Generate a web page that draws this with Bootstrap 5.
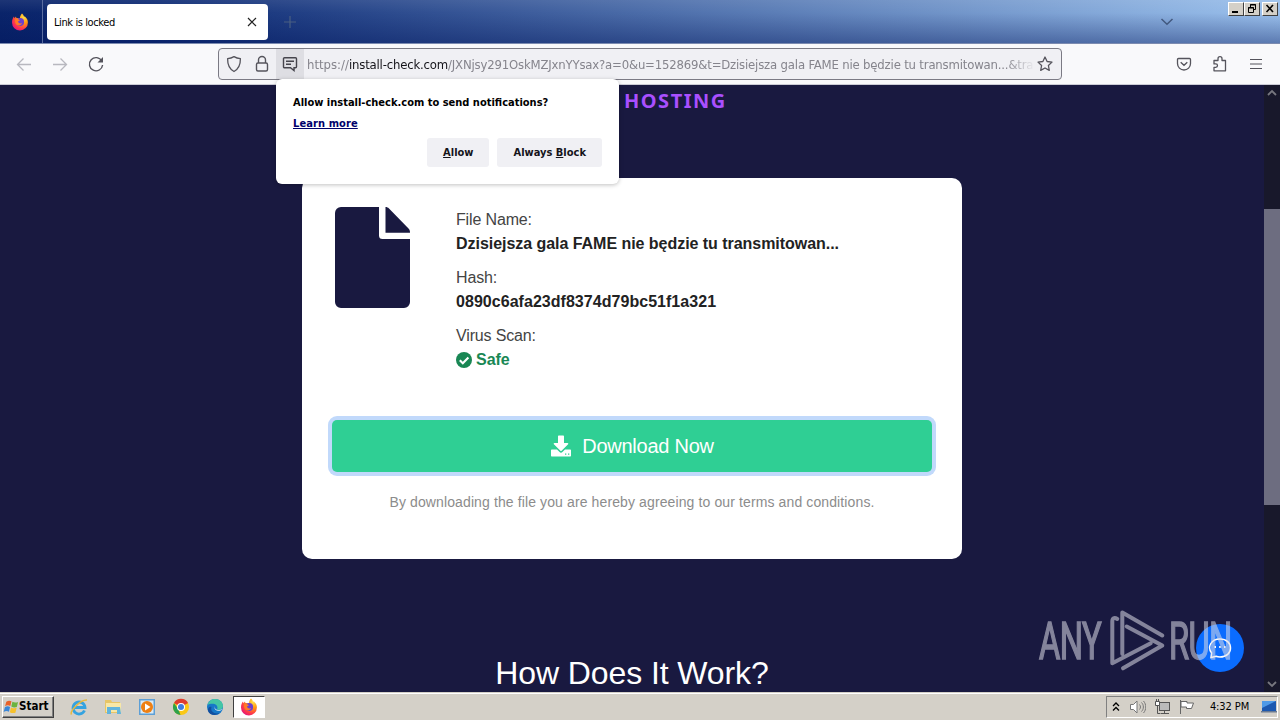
<!DOCTYPE html>
<html lang="en">
<head>
    <meta charset="UTF-8">
    <meta name="viewport" content="width=device-width, initial-scale=1.0">
    <title>Link is locked</title>
    <link href="https://cdn.jsdelivr.net/npm/bootstrap@5.3.0/dist/css/bootstrap.min.css" rel="stylesheet">
    <script src="https://cdn.jsdelivr.net/npm/bootstrap@5.3.0/dist/js/bootstrap.bundle.min.js"></script>
    <style>
        body {
            height: 720px;
            font-family: "Liberation Sans", Arial, sans-serif;
            background: #191940;
        }
        svg {
            display: block;
            flex-shrink: 0;
        }
        .ui-font {
            font-family: "DejaVu Sans Condensed", "DejaVu Sans", sans-serif;
            font-stretch: condensed;
            font-size: 11px;
        }

        /* Tab strip */
        .tab-strip {
            height: 44px;
            background: linear-gradient(to bottom, rgba(255, 255, 255, .08), rgba(0, 20, 90, 0) 30%, rgba(0, 20, 90, .4)),
                        linear-gradient(to right, #0a246a, #0f2c75 12%, #9ac0ec);
            border-bottom: 1px solid #7c8bb0;
        }
        .pinned {
            width: 43px;
            height: 43px;
            border-right: 1px solid #5a6da0;
            padding-left: 11px;
        }
        .open-tab {
            width: 221px;
            height: 36px;
            margin: 1px 15px 0 4px;
            padding: 0 10px 0 7px;
            border-radius: 4px;
            color: #000;
        }
        .open-tab span {
            padding-top: 2px;
            letter-spacing: -.4px;
        }
        .win-btn {
            width: 16px;
            height: 14px;
            background: #d4d0c8;
            border: 1px solid;
            border-color: #fff #404040 #404040 #fff;
        }
        .win-btns {
            margin: 2px 2px 0 54px;
        }
        .win-close {
            margin-left: 2px;
        }

        /* Toolbar */
        .toolbar {
            height: 41px;
            padding-left: 15px;
            background: #f9f9fb;
            border-bottom: 1px solid #ccccd6;
        }
        .nav-icons {
            width: 203px;
            gap: 18px;
        }
        .url-bar {
            width: 844px;
            height: 32px;
            padding-left: 7px;
            background: #f0f0f4;
            border: 1px solid #7b7a84;
            border-radius: 4px;
        }
        .lock-icon {
            margin: 0 6px 0 12px;
        }
        .perm-icon {
            width: 28px;
            height: 30px;
            background: #dedee3;
        }
        .url-text {
            margin-left: 3px;
            padding-top: 1px;
            font-family: "DejaVu Sans Condensed", "DejaVu Sans", sans-serif;
            font-stretch: condensed;
            font-size: 13px;
            letter-spacing: -.18px;
            color: #85848c;
            -webkit-mask-image: linear-gradient(to right, #000 698px, transparent 728px);
            mask-image: linear-gradient(to right, #000 698px, transparent 728px);
        }
        .url-text b {
            font-weight: 400;
            color: #15141a;
        }
        .url-text i {
            font-style: normal;
            letter-spacing: 0;
        }

        /* Page */
        .page-area {
            height: 607px;
            background: #191940;
        }
        .page-body {
            width: 1264px;
        }
        .brand-line {
            height: 93px;
            padding: 2px 0 0 624px;
            font-family: "Noto Sans", sans-serif;
            font-weight: 700;
            font-size: 20px;
            line-height: 28px;
            letter-spacing: 1.5px;
            color: #a94fff;
        }
        .file-card {
            width: 660px;
            height: 381px;
            padding: 29px 30px 0;
            border-radius: 10px;
            color: #222;
        }
        .file-icon {
            width: 124px;
            padding-left: 3px;
        }
        .file-info {
            padding-top: 1px;
        }
        .file-info dt {
            font-weight: 400;
            letter-spacing: -.15px;
            color: #444;
        }
        .file-info dd {
            margin-bottom: 10px;
            font-weight: 700;
            letter-spacing: -.04px;
        }
        .file-info dd.hash {
            letter-spacing: .04px;
        }
        .file-info dd.safe {
            color: #198754;
        }
        .btn-download {
            height: 52px;
            margin-top: 38px;
            background: #2fcf94;
            border-radius: 5px;
            box-shadow: 0 0 0 4px #c1d9fb;
            font-size: 20px;
            letter-spacing: -.25px;
            color: #fff;
            gap: 10px;
        }
        .terms {
            margin-top: 20px;
            font-size: 14px;
            letter-spacing: .115px;
            color: #8c8c8c;
        }
        .how-title {
            margin-top: 94px;
            font-size: 32px;
            line-height: 40px;
            letter-spacing: -.1px;
            color: #fff;
        }
        .scroll-col {
            width: 16px;
            background: #18182b;
        }
        .scroll-thumb {
            height: 296px;
            margin-top: 112px;
            background: #6d6d80;
        }

        /* Overlays */
        .perm-popup {
            left: 276px;
            top: 79px;
            width: 343px;
            height: 105px;
            padding: 16px 17px 0 16px;
            border-radius: 6px;
            box-shadow: 0 1px 4px rgba(0, 0, 0, .25);
            font-weight: 700;
            color: #000;
        }
        .perm-question,
        .perm-more {
            padding-left: 1px;
        }
        .perm-more {
            letter-spacing: .1px;
        }
        .perm-popup a {
            color: #00006b;
        }
        .popup-btns {
            margin-top: 6px;
        }
        .popup-btn {
            height: 29px;
            padding-top: 1px;
            background: #f0f0f4;
            border-radius: 3px;
            color: #15141a;
        }
        .chat-bubble {
            left: 1196px;
            top: 624px;
            width: 48px;
            height: 48px;
            background: #0a6cff;
        }
        .brandmark {
            left: 1036px;
            top: 606px;
        }

        /* Taskbar */
        .win-bar {
            height: 28px;
            background: #d4d0c8;
            border-top: 1px solid #d4d0c8;
            box-shadow: inset 0 1px #fff;
            padding: 3px 2px 0;
            color: #000;
        }
        .start-btn {
            width: 52px;
            height: 22px;
            border: 1px solid;
            border-color: #fff #404040 #404040 #fff;
            box-shadow: inset -1px -1px #808080;
            font-size: 11.5px;
            font-weight: 700;
        }
        .quick-launch {
            margin-left: 15px;
            gap: 14px;
        }
        .running-app {
            width: 32px;
            height: 22px;
            background: #fff;
            border: 1px solid;
            border-color: #404040 #fff #fff #404040;
            margin-left: -6px;
        }
        .tray {
            width: 172px;
            height: 22px;
            border: 1px solid;
            border-color: #808080 #fff #fff #808080;
        }
        .tray-time {
            padding-left: 3px;
            letter-spacing: -.1px;
        }
    </style>
</head>
<body class="overflow-hidden position-relative">
    <!-- Shared app icon -->
    <svg width="0" height="0" class="position-absolute">
        <defs>
            <radialGradient id="foxGrad" cx=".75" cy=".2" r=".9">
                <stop offset="0" stop-color="#ffe14a"/>
                <stop offset=".4" stop-color="#ff980e"/>
                <stop offset=".75" stop-color="#ff3b47"/>
                <stop offset="1" stop-color="#e3167a"/>
            </radialGradient>
            <symbol id="firefox" viewBox="0 0 18 18">
                <path fill="url(#foxGrad)" d="M11 .5c1.200 1 1.700 2 1.900 3.100 1-.1 1.600.400 2.100 1.200 1 .8 1.800 2.500 1.900 4.600A8 8 0 0 1 9 17.500 8 8 0 0 1 1 9.500c0-2.600.9-4.700 2-5.900l.4 1.600L5 3.600l.4 1.500c1.200-.3 2.400 0 3.400.5C9 3.500 9.700 1.600 11 .5z"/>
                <circle cx="9.200" cy="9" r="3.900" fill="#6b3fd0"/>
                <path fill="#ff7a26" d="M4.300 6.200c1.600-.5 3.400 0 4.700 1.100l-2 1.300c.2 1.600 2.100 2.400 4 1.500-.6 2.300-3.800 3.200-5.700 1.300C4 10.100 3.700 8 4.300 6.200z"/>
            </symbol>
        </defs>
    </svg>

    <!-- Tab strip -->
    <div class="tab-strip d-flex align-items-center ui-font">
        <div class="pinned d-flex align-items-center">
            <svg width="18" height="18"><use href="#firefox"/></svg>
        </div>
        <div class="open-tab bg-white d-flex align-items-center justify-content-between">
            <span>Link is locked</span>
            <svg width="12" height="12" viewBox="0 0 12 12" fill="none" stroke="#222" stroke-width="1.200"><path d="M2 2l8 8M10 2l-8 8"/></svg>
        </div>
        <svg width="14" height="14" viewBox="0 0 14 14" fill="none" stroke="#4a5f82" stroke-width="1.200"><path d="M7 1v12M1 7h12"/></svg>
        <svg class="ms-auto" width="14" height="10" viewBox="0 0 14 10" fill="none" stroke="#43597f" stroke-width="1.500"><path d="M1.500 2L7 7.300 12.500 2"/></svg>
        <div class="win-btns d-flex align-self-start">
            <div class="win-btn"><svg width="14" height="12" viewBox="0 0 14 12"><path d="M3 8h6v2H3z"/></svg></div>
            <div class="win-btn"><svg width="14" height="12" viewBox="0 0 14 12" fill="none" stroke="#000"><path d="M5.500 4V1.500h5v5H9M5 2h6M3.500 4.500h5v5h-5zM3 5h6"/></svg></div>
            <div class="win-btn win-close"><svg width="14" height="12" viewBox="0 0 14 12" fill="none" stroke="#000" stroke-width="1.600"><path d="M3.500 2l6.500 7M10 2L3.500 9"/></svg></div>
        </div>
    </div>

    <!-- Toolbar -->
    <div class="toolbar d-flex align-items-center">
        <div class="nav-icons d-flex align-items-center">
            <svg width="18" height="18" viewBox="0 0 18 18" fill="none" stroke="#b8b8bf" stroke-width="1.300"><path d="M16 9.500H2.500M8.500 3.500l-6 6 6 6"/></svg>
            <svg width="18" height="18" viewBox="0 0 18 18" fill="none" stroke="#b8b8bf" stroke-width="1.300"><path d="M2 9.500h13.500M9.500 3.500l6 6-6 6"/></svg>
            <svg width="18" height="18" viewBox="0 0 18 18" fill="none" stroke="#55545c" stroke-width="1.400"><path d="M14.800 6A6.600 6.600 0 1 0 15.600 10"/><path d="M16 2v5.500h-5.500z" fill="#55545c" stroke="none"/></svg>
        </div>
        <div class="url-bar d-flex align-items-center">
            <svg width="16" height="18" viewBox="0 0 16 18" fill="none" stroke="#55545c" stroke-width="1.300"><path d="M8 1.600c2 1.200 4 1.800 6.400 2C14.500 9.500 12 14.500 8 16.500 4 14.500 1.500 9.500 1.600 3.600 4 3.400 6 2.800 8 1.600z" stroke-linejoin="round"/></svg>
            <svg class="lock-icon" width="16" height="18" viewBox="0 0 16 18" fill="none" stroke="#55545c" stroke-width="1.400"><rect x="2.500" y="8" width="11" height="8" rx="1.500"/><path d="M4.500 8V5a3.500 3.500 0 0 1 7 0v3"/></svg>
            <div class="perm-icon d-flex align-items-center justify-content-center">
                <svg width="16" height="16" viewBox="0 0 16 16" fill="none" stroke="#45444c" stroke-width="1.400"><path d="M2.500 1.700h11a1 1 0 0 1 1 1v8a1 1 0 0 1-1 1H12v2.800l-3.500-2.800h-6a1 1 0 0 1-1-1v-8a1 1 0 0 1 1-1zM4 5.200h8M4 8.200h5"/></svg>
            </div>
            <div class="url-text text-nowrap"><i>https://</i><b>install-check.com</b>/JXNjsy291OskMZJxnYYsax?a=0&amp;u=152869&amp;t=Dzisiejsza gala FAME nie będzie tu transmitowan...&amp;tra</div>
            <svg class="ms-auto me-2" width="16" height="16" viewBox="0 0 16 16" fill="none" stroke="#55545c" stroke-width="1.300" stroke-linejoin="round"><path d="M8 1l2.100 4.500 4.900.6-3.600 3.400.9 4.900L8 12l-4.300 2.400.9-4.900L1 6.100l4.900-.6z"/></svg>
        </div>
        <div class="d-flex align-items-center ms-auto me-3 gap-3">
            <svg class="me-1" width="16" height="16" viewBox="0 0 16 16" fill="none" stroke="#55545c" stroke-width="1.300"><path d="M2.500 2.500h11a1 1 0 0 1 1 1V7.500a6.500 6.500 0 0 1-13 0V3.500a1 1 0 0 1 1-1zM4.700 6.200L8 9.300l3.300-3.100"/></svg>
            <svg class="me-1" width="16" height="18" viewBox="0 0 16 18" fill="none" stroke="#55545c" stroke-width="1.300" stroke-linejoin="round"><path d="M2 5.500h4V3.700a2 2 0 0 1 4 0v1.800h3.500v10.300H2v-3.500h1.800a1.700 1.700 0 0 0 0-3.400H2z"/></svg>
            <svg width="16" height="16" viewBox="0 0 16 16" stroke="#55545c" stroke-width="1.200"><path d="M2 3.500h12M2 8h12M2 12.500h12"/></svg>
        </div>
    </div>

    <!-- Page -->
    <div class="page-area d-flex overflow-hidden">
        <div class="page-body">
            <div class="brand-line">HOSTING</div>
            <div class="file-card bg-white mx-auto">
                <div class="d-flex">
                    <div class="file-icon">
                        <svg width="75" height="101" viewBox="0 0 75 101" fill="#191940"><path d="M6 0h38v28.500a3.500 3.500 0 0 0 3.500 3.500H75V95a6 6 0 0 1-6 6H6a6 6 0 0 1-6-6V6a6 6 0 0 1 6-6z"/><path d="M50.500 0c1.500 0 2.500.500 3.500 1.500L73.500 21.500c1 1 1.500 2 1.500 4.300H50.500z"/></svg>
                    </div>
                    <dl class="file-info mb-0">
                        <dt>File Name:</dt>
                        <dd>Dzisiejsza gala FAME nie będzie tu transmitowan...</dd>
                        <dt>Hash:</dt>
                        <dd class="hash">0890c6afa23df8374d79bc51f1a321</dd>
                        <dt>Virus Scan:</dt>
                        <dd class="safe d-flex align-items-center gap-1">
                            <svg width="16" height="16" viewBox="0 0 16 16"><circle cx="8" cy="8" r="8" fill="#198754"/><path d="M3.800 8.300l3 3 5.600-5.800" fill="none" stroke="#fff" stroke-width="2.100"/></svg>
                            Safe
                        </dd>
                    </dl>
                </div>
                <div class="btn-download d-flex align-items-center justify-content-center" role="button">
                    <svg width="22" height="22" viewBox="0 0 22 22"><path fill="#fff" d="M8 1.500c0-.6.400-1 1-1h4c.6 0 1 .4 1 1V8h3.500c.8 0 1.100.8.600 1.300l-6.500 6.400a.9.900 0 0 1-1.200 0L3.900 9.300C3.400 8.800 3.700 8 4.500 8H8zM2 14.500h5l2.300 2.300a2.400 2.400 0 0 0 3.400 0l2.300-2.300h5c.6 0 1 .4 1 1v5c0 .6-.4 1-1 1H2c-.6 0-1-.4-1-1v-5c0-.6.400-1 1-1z"/><path fill="#2fcf94" d="M15 18.500h1.300v1.300H15zM18 18.500h1.300v1.300H18z"/></svg>
                    Download Now
                </div>
                <div class="terms text-center">By downloading the file you are hereby agreeing to our terms and conditions.</div>
            </div>
            <div class="how-title text-center">How Does It Work?</div>
        </div>
        <div class="scroll-col d-flex flex-column align-items-stretch pt-1">
            <svg class="align-self-center" width="10" height="8" viewBox="0 0 10 8" fill="none" stroke="#77777f" stroke-width="1.800"><path d="M1 6l4-4 4 4"/></svg>
            <div class="scroll-thumb"></div>
            <svg class="align-self-center mt-auto mb-1" width="10" height="8" viewBox="0 0 10 8" fill="none" stroke="#77777f" stroke-width="1.800"><path d="M1 2l4 4 4-4"/></svg>
        </div>
    </div>

    <!-- Taskbar -->
    <div class="win-bar d-flex align-items-start ui-font">
        <div class="start-btn d-flex align-items-center">
            <svg width="16" height="16" viewBox="0 0 17 16"><path fill="#e8622a" d="M3.500 2.500C5.500 1 7.500 1.200 9 2L7.800 7C6 6 4 6 2.200 7.200z"/><path fill="#6cb33f" d="M10 2.500c2 1 4 1 6 .2L14.700 8c-2 .8-4 .6-5.900-.5z"/><path fill="#3a87d8" d="M2 8.200c2-1.200 3.800-1.100 5.500-.2L6.300 13c-1.700-1-3.700-1-5.600.2z"/><path fill="#f6c12c" d="M8.500 8.500c2 1 4 1.200 6 .4L13.200 14c-2 .8-4 .6-5.900-.5z"/></svg>
            <span>Start</span>
        </div>
        <div class="quick-launch d-flex align-items-center">
            <svg width="20" height="20" viewBox="0 0 20 20" fill="none"><path d="M15.500 13.500A6 6 0 1 1 16 10.500H5" stroke="#35a3e0" stroke-width="2.800"/><path d="M2.500 17.500c-2-3 8.500-15 15.500-14.500" stroke="#e9b93c" stroke-width="1.500"/></svg>
            <svg width="20" height="20" viewBox="0 0 20 20"><path fill="#e7c566" d="M2 3h6l1 2h8v11H2z"/><path fill="#f8e7a6" d="M3 6h15v9H3z"/><path fill="#62b4dc" d="M4 10h13l1 7h-4v-4H8v4H4z"/></svg>
            <svg width="20" height="20" viewBox="0 0 20 20"><path fill="#5d9fd6" d="M2 2h16v16H2z"/><path fill="#dbeaf5" d="M3.500 3.500h13v13h-13z"/><circle cx="10" cy="10" r="6" fill="#ee8014"/><path fill="#fff" d="M8 6.500l5.500 3.500L8 13.500z"/></svg>
            <svg width="20" height="20" viewBox="0 0 20 20"><circle cx="10" cy="10" r="8" fill="#fbc816"/><path fill="#de3c30" d="M10 10L3 6a8 8 0 0 1 14 0z"/><path fill="#2da14c" d="M3 6l4.500 6.500L9.500 18A8 8 0 0 1 3 6z"/><circle cx="10" cy="10" r="4" fill="#fff"/><circle cx="10" cy="10" r="3" fill="#3f7de0"/></svg>
            <svg width="20" height="20" viewBox="0 0 20 20"><circle cx="10" cy="10" r="8" fill="#1678c8"/><path fill="#44c6a5" d="M2.500 8C4 3.500 7 2 10 2c5 0 8 3.500 8 7 0 3-3 4.500-6 3.500 1-2 .500-4.500-2.500-5.500-2.500-.7-5.500 0-7 1z"/><path fill="#124f9f" d="M6.500 10c-1.500 4.500 3 7.500 8 6-4 3.500-10 2-11.500-2C2.500 11 4.500 9 6.500 10z"/><path fill="#e5eef0" d="M9.500 9c-.5 3 3 5.500 8 3-1.500 3-9 2.500-8-3z"/></svg>
            <div class="running-app d-flex align-items-center justify-content-center">
                <svg width="18" height="18"><use href="#firefox"/></svg>
            </div>
        </div>
        <div class="tray d-flex align-items-center ms-auto">
            <svg class="ms-1" width="10" height="12" viewBox="0 0 10 12" fill="none" stroke="#000" stroke-width="1.300"><path d="M2 5l3-3 3 3M2 9.500l3-3 3 3"/></svg>
            <svg class="ms-2" width="17" height="16" viewBox="0 0 17 16" fill="#fff" stroke="#777" stroke-width="1"><path d="M1.500 5.500h3L8 2v12l-3.500-3.500h-3z"/><path d="M10.500 5.500c1.300 1.500 1.300 3.500 0 5M12.500 3.500c2.500 2.500 2.500 6.500 0 9M14.500 2c3 3.500 3 8.500 0 12" fill="none"/></svg>
            <svg class="ms-2" width="17" height="16" viewBox="0 0 17 16" fill="none" stroke="#555"><rect x="5.500" y="3.500" width="10" height="8" fill="#bbb" stroke="#555"/><path d="M7 14.500h8M10.500 12v2"/><path d="M1.500 2.500h4v4h-4z" fill="#fff"/><path d="M2.500 0v2M4.500 0v2M3.500 7v7.500h3"/></svg>
            <svg class="ms-2" width="16" height="16" viewBox="0 0 16 16" fill="#fff" stroke="#666"><path d="M1.500 1v14M2 2.500h6v1.500h6.500L12.500 9.500h-5V8H2z"/></svg>
            <span class="tray-time mx-auto text-nowrap">4:32 PM</span>
            <svg width="16" height="14" viewBox="0 0 16 14"><path fill="#1c58b0" d="M1 1h14v10H1z"/><path fill="#4f9ae8" d="M1 1h14L1 8z"/><path fill="#6a7a92" d="M0 11h16v1.500H0z"/></svg>
        </div>
    </div>

    <!-- Notification permission popup -->
    <div class="perm-popup position-absolute bg-white ui-font">
        <div class="perm-question">Allow install-check.com to send notifications?</div>
        <div class="perm-more mt-1"><a href="#">Learn more</a></div>
        <div class="popup-btns d-flex justify-content-end gap-2">
            <div class="popup-btn px-3 d-flex align-items-center"><u>A</u>llow</div>
            <div class="popup-btn px-3 d-flex align-items-center">Always&nbsp;<u>B</u>lock</div>
        </div>
    </div>

    <!-- Chat button with the watermark over it -->
    <div class="chat-bubble position-absolute rounded-circle d-flex align-items-center justify-content-center">
        <svg width="24" height="24" viewBox="0 0 24 24" fill="none" stroke="#fff" stroke-width="1.500"><path d="M3 21.500l.6-4.500C-1 11 3 3 12 3c6.500 0 10.500 4 10.500 9S18.500 21 12 21c-1.500 0-3-.3-4-.7z"/><path d="M6.500 11H8M11.200 11h1.500M16 11h1.500" stroke-width="2"/></svg>
    </div>
    <svg class="brandmark position-absolute" width="200" height="70" viewBox="0 0 200 70" opacity=".55">
        <g fill="#dcdce6" stroke="#dcdce6" stroke-width="1.600" font-family="Roboto, sans-serif" font-size="51">
            <text transform="translate(3 53) scale(.64 1)" textLength="98" lengthAdjust="spacing">ANY</text>
            <text transform="translate(133 53) scale(.64 1)" textLength="99" lengthAdjust="spacing">RUN</text>
        </g>
        <path fill="none" stroke="#dcdce6" stroke-width="4" stroke-linejoin="round" stroke-linecap="round" d="M81.300 13c-3-2-5-1-5 2.500V57.300L114.700 37.300M86.300 48V6.500L126.300 29.500M90.700 20.500l35.600 19L87 62.300"/>
    </svg>
</body>
</html>
